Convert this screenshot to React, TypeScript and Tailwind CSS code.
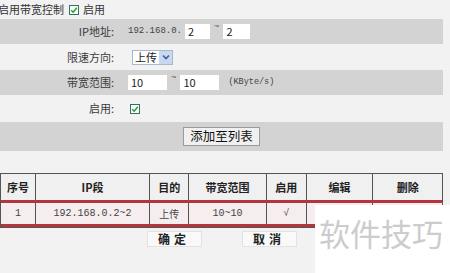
import React from "react";

const cjk = { fontFamily: '"Noto Sans CJK SC", "Noto Sans", sans-serif' };
const mono = { fontFamily: '"Liberation Mono", "DejaVu Sans Mono", monospace' };

function Check({ className = "" }: { className?: string }) {
  return (
    <span className={"inline-flex items-center justify-center w-[10px] h-[10px] border border-[#3c6b6b] bg-[#f4fff4] " + className}>
      <svg width="8" height="8" viewBox="0 0 8 8">
        <path d="M1.2 4.2 L3.2 6.2 L6.8 1.8" stroke="#2d9a3a" strokeWidth="1.5" fill="none" />
      </svg>
    </span>
  );
}

function Row({ label, gray, h, children }: { label: string; gray?: boolean; h: string; children: React.ReactNode }) {
  return (
    <div className={"flex items-center " + h + (gray ? " bg-[#d3d3d3]" : "")}>
      <div className="w-[115px] text-right text-[11px] text-[#3a3a3a] pr-[1px]" style={cjk}>{label}</div>
      <div className="ml-[13px] flex items-center">{children}</div>
    </div>
  );
}

function Input({ v, w }: { v: string; w: string }) {
  return (
    <div className={"h-[15px] bg-white flex items-center pl-[3px] text-[11px] text-[#222] " + w} style={cjk}>{v}</div>
  );
}

function Tilde() {
  return <span className="text-[9px] text-[#555] self-start -mt-[3px] mx-[4px]" style={mono}>~</span>;
}

export default function App() {
  const cols = ["w-[35px]", "w-[115px]", "w-[39px]", "w-[78px]", "w-[40px]", "w-[67px]", "w-[69px]"];
  const heads = ["序号", "IP段", "目的", "带宽范围", "启用", "编辑", "删除"];
  const data = ["1", "192.168.0.2~2", "上传", "10~10", "√", "", ""];
  return (
    <div className="w-[450px] h-[273px] bg-[#f2f2f2] relative overflow-hidden">
      <div className="w-[443px]">
        <div className="h-[19px] flex items-center text-[11px] text-[#333] -ml-[2px]" style={cjk}>
          <span>启用带宽控制</span>
          <Check className="ml-[5px] mr-[4px]" />
          <span>启用</span>
        </div>
        <Row label="IP地址:" gray h="h-[25px]">
          <span className="text-[9px] text-[#444] w-[57px]" style={mono}>192.168.0.</span>
          <Input v="2" w="w-[25px]" />
          <Tilde />
          <Input v="2" w="w-[27px]" />
        </Row>
        <Row label="限速方向:" h="h-[26px]">
          <div className="ml-[4px] h-[15px] w-[41px] bg-white border border-[#a8b8c8] flex items-center justify-between text-[11px] text-[#222]" style={cjk}>
            <span className="pl-[2px]">上传</span>
            <span className="w-[13px] h-[13px] bg-[#c8d8f0] flex items-center justify-center">
              <svg width="8" height="6" viewBox="0 0 8 6"><path d="M1 1.5 L4 4.5 L7 1.5" stroke="#3a5fa0" strokeWidth="1.6" fill="none" /></svg>
            </span>
          </div>
        </Row>
        <Row label="带宽范围:" gray h="h-[25px]">
          <Input v="10" w="w-[39px]" />
          <Tilde />
          <Input v="10" w="w-[39px]" />
          <span className="ml-[9px] text-[8.5px] text-[#444]" style={mono}>(KByte/s)</span>
        </Row>
        <Row label="启用:" h="h-[27px]">
          <Check className="ml-[2px]" />
        </Row>
        <div className="h-[29px] bg-[#d3d3d3] flex items-center justify-center">
          <div className="h-[19px] px-[6px] bg-[#f0f0f0] border border-[#9a9a9a] flex items-center text-[12.5px] text-[#111]" style={cjk}>添加至列表</div>
        </div>
        <div className="h-[22px]" />
        <div className="border border-[#555]">
          <div className="flex h-[26px] bg-[#f0f0f0]">
            {heads.map((t, i) => (
              <div key={i} className={cols[i] + " flex items-center justify-center text-[11px] font-bold text-[#222]" + (i < 6 ? " border-r border-[#555]" : "")} style={cjk}>{t}</div>
            ))}
          </div>
          <div className="flex h-[27px] border-t-[3px] border-b-[3px] border-[#b3363c] bg-[#f6eeee]">
            {data.map((t, i) => (
              <div key={i} className={cols[i] + " flex items-center justify-center text-[10px] text-[#444]" + (i < 6 ? " border-r border-[#555]" : "")} style={i === 2 ? cjk : mono}>{t}</div>
            ))}
          </div>
        </div>
        <div className="flex justify-center gap-[40px] mt-[3px]">
          <div className="w-[55px] h-[16px] bg-[#f9f9f9] border border-[#e2e2e2] flex items-center justify-center text-[12px] font-bold text-[#222] tracking-[4px]" style={cjk}>确定</div>
          <div className="w-[55px] h-[16px] bg-[#f9f9f9] border border-[#e2e2e2] flex items-center justify-center text-[12px] font-bold text-[#222] tracking-[4px]" style={cjk}>取消</div>
        </div>
      </div>
      <div className="absolute left-[315px] top-[205px] w-[135px] h-[68px] bg-white flex items-start pt-[12px] pl-[4px]">
        <span className="text-[31px] leading-none text-[#cccccc]" style={cjk}>软件技巧</span>
      </div>
    </div>
  );
}
